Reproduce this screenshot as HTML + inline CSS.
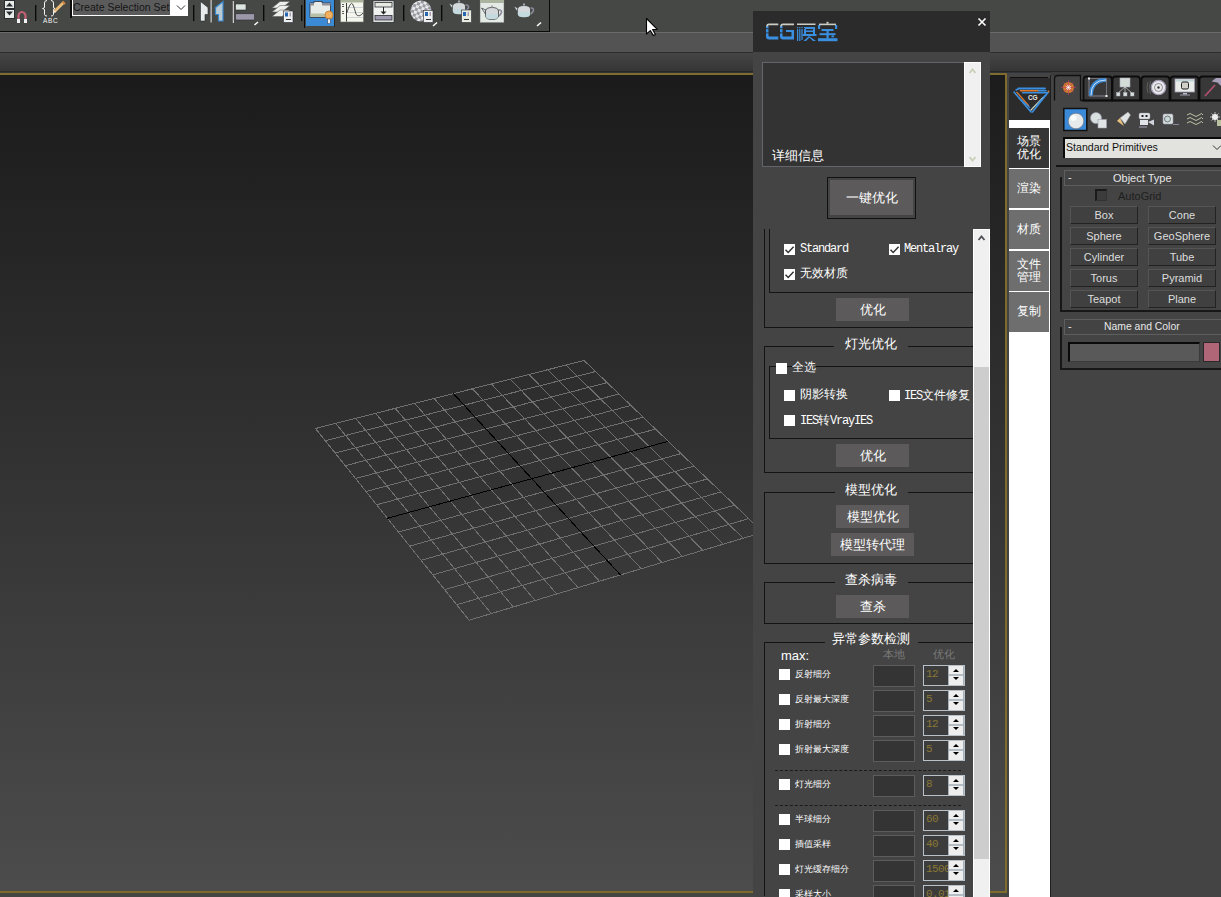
<!DOCTYPE html>
<html><head><meta charset="utf-8">
<style>
*{margin:0;padding:0;box-sizing:border-box}
html,body{width:1221px;height:897px;overflow:hidden;background:#444;font-family:"Liberation Sans",sans-serif;}
.a{position:absolute}
#tb{left:0;top:0;width:1221px;height:32px;background:#464846}
#tbline{left:0;top:32px;width:1221px;height:1px;background:#6a6a6a}
#band2{left:0;top:33px;width:1221px;height:19px;background:#535353}
#band2l{left:0;top:52px;width:1221px;height:1px;background:#2e2e2e}
#band3{left:0;top:53px;width:1221px;height:20px;background:linear-gradient(#454545,#363636 88%,#262626 90%,#262626 95%,#30333a 95%)}
#vp{left:0;top:73px;width:1007px;height:820px;border:2px solid #7f6b2b;border-left:none;background:linear-gradient(#1b1b1b,#4c4c4c)}
#below{left:0;top:893px;width:1007px;height:4px;background:#444644}
/* plugin panel */
#pp{left:753px;top:11px;width:237px;height:886px;background:#444}
#pph{left:753px;top:11px;width:237px;height:41px;background:#2b2b2b}
.cj{font-family:"Liberation Sans",sans-serif;color:#fff}
#info{left:762px;top:62px;width:202px;height:105px;background:#333;border:1px solid #62666c;border-right:none}
#infosb{left:964px;top:62px;width:17px;height:105px;background:#f0f0f0;border:1px solid #fff}
.btn{background:#5c5a5a;color:#fff;font-size:13px;text-align:center}
.gl{background:#151515}
.cb{width:11px;height:11px;background:#fff}
.mono{font-family:"Liberation Mono",monospace;font-size:12px;color:#fff;letter-spacing:-1.2px;white-space:nowrap}
.mono b{font-weight:normal;font-family:"Liberation Sans",sans-serif;letter-spacing:0}
.sm{font-size:9px;color:#fff}
.loc{width:42px;height:22px;background:#343434;border:1px solid #5a5a5a}
.spn{width:42px;height:21px;background:#3c3c3c;border:1px solid #b8c0c8}
.spn .v{position:absolute;left:2px;top:2px;font-size:11px;line-height:12px;color:#8a7834;font-family:"Liberation Mono",monospace;letter-spacing:-0.6px;width:22px;overflow:hidden;white-space:nowrap}
.spn .bt{position:absolute;left:24px;top:0;width:16px;height:19px;background:#eeeeee;border-left:1px solid #a8b0b8;border-right:1px solid #a8b0b8}
.spn .md{position:absolute;left:0;top:8px;width:14px;height:2px;background:#b4bcc4}
.up{position:absolute;left:4px;top:3px;width:0;height:0;border-left:3px solid transparent;border-right:3px solid transparent;border-bottom:3px solid #000}
.dn{position:absolute;left:4px;top:11px;width:0;height:0;border-left:3px solid transparent;border-right:3px solid transparent;border-top:3px solid #000}
.dash{border-top:1px dashed #111;height:1px}
/* tab strip */
#ts{left:1009px;top:76px;width:41px;height:821px;background:#fff}
.tab{position:absolute;left:0;width:40px;background:#6f6f6f;color:#eee;font-size:13px;line-height:13px;text-align:center}
/* cmd panel */
#cp{left:1050px;top:74px;width:171px;height:823px;background:#444;border-left:2px solid #222}
.ob{position:absolute;width:68px;height:18px;background:#404040;border:1px solid #222;border-top-color:#555;border-left-color:#555;color:#ddd;font-size:11px;line-height:16px;text-align:center}
</style></head><body>
<div class="a" id="tb"></div>
<div class="a" id="tbline"></div>
<div class="a" id="band2"></div>
<div class="a" id="band2l"></div>
<div class="a" id="band3"></div>
<svg class="a" style="left:0;top:0" width="560" height="32">
<!-- spinner -->
<rect x="4.5" y="0.5" width="10" height="8" fill="#e9ede9" stroke="#2a2e33"/>
<rect x="4.5" y="9.5" width="10" height="9" fill="#e9ede9" stroke="#2a2e33"/>
<path d="M6 6.5L9.5 2.5L13 6.5Z" fill="#2a2e33"/><path d="M6 11.5L9.5 15.5L13 11.5Z" fill="#2a2e33"/>
<!-- magnet -->
<path d="M18.5 23V16a3.5 4 0 0 1 7 0V23" fill="none" stroke="#c46075" stroke-width="2.2"/>
<rect x="17" y="19" width="3" height="4" fill="#f2f4f8"/><rect x="24" y="19" width="3" height="4" fill="#f2f4f8"/>
<rect x="35" y="5" width="1.4" height="16" fill="#0a0a0a"/>
<!-- braces ABC pencil -->
<path d="M47 0.5Q44.5 0.5 44.5 3V7Q44.5 8.5 42.5 8.5Q44.5 8.5 44.5 10V14.5Q44.5 16 47 16M51 0.5Q53.5 0.5 53.5 3V7Q53.5 8.5 55 8.5Q53.5 8.5 53.5 10V14.5Q53.5 16 51 16" fill="none" stroke="#f4f4f4" stroke-width="1"/>
<text x="43" y="23" font-family="Liberation Sans" font-size="6.5" fill="#f4f4f4" letter-spacing="0.7">ABC</text>
<path d="M54 12L63.5 2.5" stroke="#f0c888" stroke-width="2.8"/><path d="M54.5 11L63 2.5" stroke="#e8a050" stroke-width="1"/><path d="M62.5 1.5L65 4" stroke="#d08840" stroke-width="2"/><path d="M53 13l1.5 -2.5l1.5 1.5z" fill="#f0f0f0"/>
<!-- dropdown -->
<rect x="70" y="0" width="2" height="18" fill="#0d0d0d"/>
<rect x="72" y="0" width="116" height="16" fill="#fff"/>
<rect x="73" y="0" width="97" height="15" fill="#5b5b5b"/>
<path d="M177 5.5L181 9.5L185 5.5" fill="none" stroke="#333" stroke-width="1"/>
<rect x="193" y="5" width="1.4" height="16" fill="#0a0a0a"/>
<!-- mirror -->
<path d="M200.5 1.5L208 7.5V14.5H205V21H200.5Z" fill="#e6ecec" stroke="#2a2e33" stroke-width="0.6"/>
<rect x="210.6" y="0" width="1" height="22.5" fill="#e8e8e8"/>
<path d="M223 1.5L215.5 7.5V14.5H218.5V21H223Z" fill="#b8cad4" stroke="#3a86cc" stroke-width="1.2"/>
<!-- align -->
<rect x="232.8" y="1" width="1" height="22" fill="#e8e8e8"/>
<rect x="235.5" y="4" width="10.5" height="6" fill="#dde5e0" stroke="#2a2e33" stroke-width="0.6"/>
<rect x="235.5" y="13.8" width="19" height="6.2" fill="#9c98a8" stroke="#2a2e33" stroke-width="0.6"/>
<path d="M254.5 25L258 22" stroke="#fff" stroke-width="1.5"/>
<rect x="263" y="5" width="1.4" height="16" fill="#0a0a0a"/>
<!-- layers -->
<path d="M272 8L280 1.5H290L282 8Z" fill="#eceeea" stroke="#555" stroke-width="0.5"/>
<path d="M272 12L280 5.5H290L282 12Z" fill="#eceeea" stroke="#555" stroke-width="0.5"/>
<path d="M272 16.5L280 10H290L282 16.5Z" fill="#eceeea" stroke="#555" stroke-width="0.5"/>
<rect x="283.5" y="11" width="9.5" height="11.5" fill="#eef0f2" stroke="#2a2e33" stroke-width="0.6"/>
<rect x="285" y="12.5" width="3" height="4" fill="#2868b0"/><rect x="289.5" y="12.5" width="1.5" height="4" fill="#a8a0b0"/>
<rect x="286" y="19" width="5" height="1" fill="#333"/>
<rect x="301" y="5" width="1.4" height="16" fill="#0a0a0a"/>
<rect x="304" y="0" width="1" height="28" fill="#0a0a0a"/>
<!-- blue button -->
<rect x="306" y="0" width="28" height="26" fill="#3a8ad6"/>
<rect x="334" y="0" width="1" height="27" fill="#2a2a2a"/>
<path d="M310 3H314V1.5H322V3H330.5V17.5H310Z" fill="#e8ece8" stroke="#2a2e33" stroke-width="0.8"/>
<rect x="310" y="3" width="4" height="2.5" fill="#8f8f9a"/><rect x="322" y="3" width="8.5" height="2.5" fill="#8f8f9a"/>
<rect x="310.5" y="13.5" width="19.5" height="3.5" fill="#b8c0a8"/>
<circle cx="329" cy="15" r="4" fill="#f0b060" stroke="#c07a30" stroke-width="0.8"/>
<rect x="327.8" y="19" width="2.4" height="4.5" fill="#eee" stroke="#333" stroke-width="0.4"/>
<!-- curve editor -->
<rect x="340.5" y="0.5" width="23" height="21.5" fill="#f4f6ee" stroke="#6a6e60" stroke-width="0.6"/>
<rect x="340.5" y="0" width="23" height="2.5" fill="#aab39c"/>
<rect x="346" y="3" width="0.9" height="18.5" fill="#222"/>
<path d="M342 4.5h2M342 6.5h2M342 11.5h2M342 13.5h2" stroke="#333" stroke-width="0.8"/>
<path d="M347 12.5h16M347 7.5h16M347 17.5h16" stroke="#a8b0c0" stroke-width="0.5"/>
<path d="M347 12.5C349 6 351 2 352.5 4C354 6 355 11 356 14C357 16 360 17 363 13" fill="none" stroke="#333" stroke-width="0.9"/>
<!-- stack -->
<rect x="373" y="0.8" width="21" height="21.5" fill="#f0f2f0" stroke="#2a2e33" stroke-width="0.8"/>
<rect x="375" y="2.5" width="17" height="4.5" fill="#e6e8e2" stroke="#2a2e33" stroke-width="0.8"/>
<rect x="375" y="15.5" width="17" height="4.5" fill="#a09aae" stroke="#2a2e33" stroke-width="0.8"/>
<path d="M383.5 7v6" stroke="#222" stroke-width="1"/><path d="M380.5 11.5h6l-3 3z" fill="#222"/>
<rect x="403" y="5" width="1.4" height="16" fill="#0a0a0a"/>
<!-- checker sphere -->
<defs><pattern id="chk" width="6" height="6" patternUnits="userSpaceOnUse" patternTransform="rotate(20)"><rect width="6" height="6" fill="#e8e8e8"/><rect width="3" height="3" fill="#9a9aa4"/><rect x="3" y="3" width="3" height="3" fill="#9a9aa4"/></pattern></defs>
<circle cx="421" cy="11" r="10.5" fill="url(#chk)"/>
<rect x="423.5" y="10.5" width="9.5" height="12" fill="#eef0f2" stroke="#2a2e33" stroke-width="0.6"/>
<rect x="425" y="12" width="3" height="4" fill="#2868b0"/><rect x="429.5" y="12" width="1.5" height="4" fill="#a8a0b0"/><rect x="426" y="19" width="5" height="1" fill="#333"/>
<path d="M433 26L437 22.5" stroke="#fff" stroke-width="1.5"/>
<rect x="441" y="5" width="1.4" height="16" fill="#0a0a0a"/>
<!-- teapot+doc -->
<g transform="translate(448,0) scale(1.0)">
<path d="M0.5 3L6 5.5L6 11.5Z" fill="#d0dce0" stroke="#333" stroke-width="0.6"/>
<path d="M16 5.5Q21 4 20.5 7.5Q19.5 10.5 15.5 12" fill="none" stroke="#8a8a9a" stroke-width="1.6"/>
<path d="M4.5 6Q5 2.5 11 2.5Q17 2.5 17.5 6V11Q17 14.5 11 14.5Q5 14.5 4.5 11Z" fill="#d4d8da" stroke="#333" stroke-width="0.7"/>
<path d="M4.8 9H17.2V11Q17 14.2 11 14.2Q5 14.2 4.8 11Z" fill="#c4dadf"/>
<rect x="10" y="0.5" width="2" height="2" fill="#a8a8b0"/>
</g>
<rect x="461.5" y="10" width="10" height="12.5" fill="#e8ece0" stroke="#2a2e33" stroke-width="0.6"/>
<rect x="463" y="12" width="3" height="4" fill="#2868b0"/><rect x="467.5" y="12" width="1.5" height="4" fill="#a8a0b0"/><rect x="464" y="19" width="5" height="1" fill="#333"/>
<!-- framed teapot -->
<rect x="480" y="0" width="24" height="22.7" fill="#e4eae6" stroke="#666" stroke-width="0.5"/>
<rect x="480" y="0" width="24" height="3" fill="#aab39e"/>
<g transform="translate(481,5) scale(1.0)">
<path d="M0.5 3L6 5.5L6 11.5Z" fill="#d0dce0" stroke="#222" stroke-width="0.6"/>
<path d="M16 5.5Q21 4 20.5 7.5Q19.5 10.5 15.5 12" fill="none" stroke="#8a8a9a" stroke-width="1.6"/>
<path d="M4.5 6Q5 2.5 11 2.5Q17 2.5 17.5 6V11Q17 14.5 11 14.5Q5 14.5 4.5 11Z" fill="#d4d8da" stroke="#222" stroke-width="0.7"/>
<path d="M4.8 9H17.2V11Q17 14.2 11 14.2Q5 14.2 4.8 11Z" fill="#c4dadf"/>
<rect x="10" y="0.5" width="2" height="2" fill="#a8a8b0"/>
</g>
<!-- teapot -->
<g transform="translate(513,3) scale(1.0)">
<path d="M0.5 3L6 5.5L6 11.5Z" fill="#d0dce0" stroke="#333" stroke-width="0.6"/>
<path d="M16 5.5Q21 4 20.5 7.5Q19.5 10.5 15.5 12" fill="none" stroke="#8a8a9a" stroke-width="1.6"/>
<path d="M4.5 6Q5 2.5 11 2.5Q17 2.5 17.5 6V11Q17 14.5 11 14.5Q5 14.5 4.5 11Z" fill="#d4d8da" stroke="#333" stroke-width="0.7"/>
<path d="M4.8 9H17.2V11Q17 14.2 11 14.2Q5 14.2 4.8 11Z" fill="#c4dadf"/>
<rect x="10" y="0.5" width="2" height="2" fill="#a8a8b0"/>
</g>
<path d="M537 26L541 22.5" stroke="#fff" stroke-width="1.5"/>
<rect x="549" y="0" width="1" height="32" fill="#0a0a0a"/>
<rect x="0" y="31" width="550" height="1" fill="#0a0a0a"/>
</svg>
<div class="a" style="left:73px;top:1px;width:97px;height:14px;overflow:hidden;font-size:10.5px;line-height:12px;color:#151515;white-space:nowrap">Create Selection Set</div>

<div class="a" id="vp"></div>
<div class="a" id="below"></div>
<svg class="a" style="left:0;top:0" width="1221" height="897">
<path d="M315.5 428.5L469.1 620.2M315.5 428.5L584.1 360.5M335.7 423.4L491.3 613.6M325.3 440.7L595.5 371.5M355.7 418.4L513.3 607.0M335.2 453.1L607.1 382.6M375.5 413.3L535.1 600.5M345.3 465.7L619.0 394.0M395.2 408.4L556.7 594.0M355.5 478.5L630.9 405.5M414.7 403.4L578.1 587.6M366.0 491.5L643.2 417.2M434.1 398.5L599.4 581.2M376.6 504.8L655.6 429.1M472.5 388.8L641.3 568.7M398.5 532.1L681.0 453.6M491.4 384.0L662.0 562.5M409.7 546.1L694.1 466.1M510.3 379.2L682.6 556.4M421.1 560.3L707.4 478.9M528.9 374.5L702.9 550.3M432.8 574.9L720.9 491.9M547.5 369.8L723.1 544.2M444.6 589.7L734.7 505.1M565.9 365.1L743.1 538.2M456.7 604.8L748.7 518.6M584.1 360.5L763.0 532.3M469.1 620.2L763.0 532.3" stroke="#6f6f6f" fill="none" shape-rendering="crispEdges"/>
<path d="M453.4 393.6L620.4 574.9M387.4 518.3L668.2 441.3" stroke="#000" fill="none" shape-rendering="crispEdges"/>
</svg>

<!-- plugin panel -->
<div class="a" id="pp"></div>
<div class="a" id="pph"></div>
<svg class="a" style="left:760px;top:18px" width="85" height="28">
<g transform="translate(-760,-18)">
<g fill="#3a8fe0">
<!-- C -->
<path d="M766 26H768.5V35.5Q768.5 36.5 769.5 36.5H778.5V39.5H769Q766 39.5 766 36.5Z"/>
<!-- G -->
<path d="M780 26H782.5V35.5Q782.5 36.5 783.5 36.5H794V39.5H783Q780 39.5 780 36.5Z"/><rect x="786" y="30" width="8" height="2"/><rect x="791.5" y="30" width="2.5" height="8"/>
<!-- 模 -->
<rect x="797" y="27" width="1.2" height="14"/><rect x="799.2" y="27" width="1.2" height="14"/><rect x="801.4" y="27" width="1.2" height="13"/>
<rect x="804" y="27" width="11" height="2"/><rect x="804" y="27" width="2" height="7"/><rect x="813" y="27" width="2" height="7"/><rect x="804" y="30.5" width="11" height="1.5"/>
<rect x="802.5" y="34" width="14" height="2"/><path d="M809 36L803.5 41H806L809.5 37.5L813 41H816Z"/>
<!-- 宝 -->
<rect x="818" y="25" width="2.2" height="4"/><rect x="835" y="25" width="2.2" height="4"/>
<rect x="821.5" y="29" width="12" height="2"/><rect x="819.5" y="33.2" width="16" height="2"/><rect x="818" y="38.2" width="19.5" height="3"/><rect x="826.5" y="29" width="2.2" height="9.5"/><rect x="831.5" y="35.5" width="2.5" height="1.8"/>
</g>
<g fill="#c9cdc4">
<path d="M766.2 26.5Q766.2 23.6 769 23.6H778.5V25.2H769Q767.8 25.2 767.8 26.5Z"/><path d="M780.2 26.5Q780.2 23.6 783 23.6H794V25.2H783Q781.8 25.2 781.8 26.5Z"/>
<rect x="797" y="23.5" width="18.5" height="1.5"/><rect x="819" y="23.6" width="17" height="1.6"/><rect x="826.5" y="21.8" width="2" height="2"/>
</g>
<g fill="#2b2b2b"><rect x="765" y="28.3" width="40" height="0.8"/><rect x="778.6" y="23" width="1" height="18"/><rect x="765" y="32.5" width="16" height="0.8"/><rect x="779" y="32.5" width="5" height="0.8"/></g>
</g>
</svg>
<svg class="a" style="left:977px;top:17px" width="10" height="10"><path d="M1.5 1.5L8.5 8.5M8.5 1.5L1.5 8.5" stroke="#fff" stroke-width="1.6"/></svg>
<div class="a" id="info"></div>
<div class="a" id="infosb"></div>
<div class="a cj" style="left:772px;top:147px;font-size:13px">详细信息</div>
<svg class="a" style="left:964px;top:62px" width="17" height="105"><path d="M5.5 11L8.5 7.5L11.5 11M5.5 95L8.5 98.5L11.5 95" fill="none" stroke="#c8d0b8" stroke-width="1.8"/></svg>
<div class="a" style="left:827px;top:177px;width:89px;height:42px;border:1px solid #111"></div>
<div class="a btn" style="left:830px;top:180px;width:83px;height:35px;line-height:35px">一键优化</div>

<!-- scroll region -->
<div class="a" id="sc" style="left:753px;top:229px;width:220px;height:668px;overflow:hidden">
<div class="a" style="left:11px;top:0px;width:1px;height:98px;background:#141414"></div>
<div class="a" style="left:11px;top:98px;width:209px;height:1px;background:#141414"></div>
<div class="a" style="left:16px;top:0px;width:1px;height:63px;background:#141414"></div>
<div class="a" style="left:16px;top:63px;width:204px;height:1px;background:#141414"></div>
<div class="a cb" style="left:31px;top:15px"><svg width="11" height="11" style="position:absolute;left:0;top:0"><path d="M1.5 5.8L4.2 8.5L9.6 2.8" fill="none" stroke="#333" stroke-width="1.5"/></svg></div>
<div class="a mono" style="left:47px;top:13px;line-height:14px">Standard</div>
<div class="a cb" style="left:136px;top:15px"><svg width="11" height="11" style="position:absolute;left:0;top:0"><path d="M1.5 5.8L4.2 8.5L9.6 2.8" fill="none" stroke="#333" stroke-width="1.5"/></svg></div>
<div class="a mono" style="left:151px;top:13px;line-height:14px">Mentalray</div>
<div class="a cb" style="left:31px;top:40px"><svg width="11" height="11" style="position:absolute;left:0;top:0"><path d="M1.5 5.8L4.2 8.5L9.6 2.8" fill="none" stroke="#333" stroke-width="1.5"/></svg></div>
<div class="a cj" style="left:47px;top:37px;font-size:12px;line-height:14px">无效材质</div>
<div class="a btn" style="left:83px;top:69px;width:73px;height:23px;line-height:23px">优化</div>
<div class="a" style="left:11px;top:117px;width:70px;height:1px;background:#141414"></div>
<div class="a" style="left:155px;top:117px;width:65px;height:1px;background:#141414"></div>
<div class="a cj" style="left:92px;top:107px;font-size:13px;line-height:15px">灯光优化</div>
<div class="a" style="left:11px;top:117px;width:1px;height:126px;background:#141414"></div>
<div class="a" style="left:11px;top:243px;width:209px;height:1px;background:#141414"></div>
<div class="a" style="left:16px;top:137px;width:204px;height:1px;background:#141414"></div>
<div class="a" style="left:16px;top:137px;width:1px;height:72px;background:#141414"></div>
<div class="a" style="left:16px;top:209px;width:204px;height:1px;background:#141414"></div>
<div class="a cb" style="left:23px;top:134px"></div>
<div class="a cj" style="left:39px;top:131px;font-size:12px;line-height:14px">全选</div>
<div class="a cb" style="left:31px;top:161px"></div>
<div class="a cj" style="left:47px;top:158px;font-size:12px;line-height:14px">阴影转换</div>
<div class="a cb" style="left:136px;top:161px"></div>
<div class="a mono" style="left:151px;top:159px;line-height:14px">IES<b>文件修复</b></div>
<div class="a cb" style="left:31px;top:186px"></div>
<div class="a mono" style="left:47px;top:184px;line-height:14px">IES<b>转</b>VrayIES</div>
<div class="a btn" style="left:83px;top:215px;width:73px;height:23px;line-height:23px">优化</div>
<div class="a" style="left:11px;top:263px;width:71px;height:1px;background:#141414"></div>
<div class="a" style="left:155px;top:263px;width:65px;height:1px;background:#141414"></div>
<div class="a cj" style="left:92px;top:253px;font-size:13px;line-height:15px">模型优化</div>
<div class="a" style="left:11px;top:263px;width:1px;height:71px;background:#141414"></div>
<div class="a" style="left:11px;top:334px;width:209px;height:1px;background:#141414"></div>
<div class="a btn" style="left:83px;top:276px;width:73px;height:23px;line-height:23px">模型优化</div>
<div class="a btn" style="left:78px;top:304px;width:83px;height:23px;line-height:23px">模型转代理</div>
<div class="a" style="left:11px;top:353px;width:71px;height:1px;background:#141414"></div>
<div class="a" style="left:155px;top:353px;width:65px;height:1px;background:#141414"></div>
<div class="a cj" style="left:92px;top:343px;font-size:13px;line-height:15px">查杀病毒</div>
<div class="a" style="left:11px;top:353px;width:1px;height:41px;background:#141414"></div>
<div class="a" style="left:11px;top:394px;width:209px;height:1px;background:#141414"></div>
<div class="a btn" style="left:83px;top:366px;width:73px;height:23px;line-height:23px">查杀</div>
<div class="a" style="left:11px;top:413px;width:61px;height:1px;background:#141414"></div>
<div class="a" style="left:165px;top:413px;width:55px;height:1px;background:#141414"></div>
<div class="a cj" style="left:79px;top:402px;font-size:13px;line-height:15px">异常参数检测</div>
<div class="a" style="left:11px;top:413px;width:1px;height:254px;background:#141414"></div>
<div class="a cj" style="left:28px;top:419px;font-size:13px;line-height:15px">max:</div>
<div class="a cj" style="left:130px;top:419px;font-size:11px;line-height:13px;color:#7a7a7a">本地</div>
<div class="a cj" style="left:180px;top:419px;font-size:11px;line-height:13px;color:#7a7a7a">优化</div>
<div class="a cb" style="left:26px;top:440px"></div>
<div class="a sm" style="left:42px;top:440px;line-height:11px">反射细分</div>
<div class="a" style="left:120px;top:436px;width:42px;height:22px;background:#343434;border:1px solid #5c5c5c"></div>
<div class="a spn" style="left:170px;top:436px"><div class="v">12</div><div class="bt"><div class="md"></div><div class="up"></div><div class="dn"></div></div></div>
<div class="a cb" style="left:26px;top:465px"></div>
<div class="a sm" style="left:42px;top:465px;line-height:11px">反射最大深度</div>
<div class="a" style="left:120px;top:461px;width:42px;height:22px;background:#343434;border:1px solid #5c5c5c"></div>
<div class="a spn" style="left:170px;top:461px"><div class="v">5</div><div class="bt"><div class="md"></div><div class="up"></div><div class="dn"></div></div></div>
<div class="a cb" style="left:26px;top:490px"></div>
<div class="a sm" style="left:42px;top:490px;line-height:11px">折射细分</div>
<div class="a" style="left:120px;top:486px;width:42px;height:22px;background:#343434;border:1px solid #5c5c5c"></div>
<div class="a spn" style="left:170px;top:486px"><div class="v">12</div><div class="bt"><div class="md"></div><div class="up"></div><div class="dn"></div></div></div>
<div class="a cb" style="left:26px;top:515px"></div>
<div class="a sm" style="left:42px;top:515px;line-height:11px">折射最大深度</div>
<div class="a" style="left:120px;top:511px;width:42px;height:22px;background:#343434;border:1px solid #5c5c5c"></div>
<div class="a spn" style="left:170px;top:511px"><div class="v">5</div><div class="bt"><div class="md"></div><div class="up"></div><div class="dn"></div></div></div>
<div class="a cb" style="left:26px;top:550px"></div>
<div class="a sm" style="left:42px;top:550px;line-height:11px">灯光细分</div>
<div class="a" style="left:120px;top:546px;width:42px;height:22px;background:#343434;border:1px solid #5c5c5c"></div>
<div class="a spn" style="left:170px;top:546px"><div class="v">8</div><div class="bt"><div class="md"></div><div class="up"></div><div class="dn"></div></div></div>
<div class="a cb" style="left:26px;top:585px"></div>
<div class="a sm" style="left:42px;top:585px;line-height:11px">半球细分</div>
<div class="a" style="left:120px;top:581px;width:42px;height:22px;background:#343434;border:1px solid #5c5c5c"></div>
<div class="a spn" style="left:170px;top:581px"><div class="v">60</div><div class="bt"><div class="md"></div><div class="up"></div><div class="dn"></div></div></div>
<div class="a cb" style="left:26px;top:610px"></div>
<div class="a sm" style="left:42px;top:610px;line-height:11px">插值采样</div>
<div class="a" style="left:120px;top:606px;width:42px;height:22px;background:#343434;border:1px solid #5c5c5c"></div>
<div class="a spn" style="left:170px;top:606px"><div class="v">40</div><div class="bt"><div class="md"></div><div class="up"></div><div class="dn"></div></div></div>
<div class="a cb" style="left:26px;top:635px"></div>
<div class="a sm" style="left:42px;top:635px;line-height:11px">灯光缓存细分</div>
<div class="a" style="left:120px;top:631px;width:42px;height:22px;background:#343434;border:1px solid #5c5c5c"></div>
<div class="a spn" style="left:170px;top:631px"><div class="v">1500</div><div class="bt"><div class="md"></div><div class="up"></div><div class="dn"></div></div></div>
<div class="a cb" style="left:26px;top:660px"></div>
<div class="a sm" style="left:42px;top:660px;line-height:11px">采样大小</div>
<div class="a" style="left:120px;top:656px;width:42px;height:22px;background:#343434;border:1px solid #5c5c5c"></div>
<div class="a spn" style="left:170px;top:656px"><div class="v">0.01</div><div class="bt"><div class="md"></div><div class="up"></div><div class="dn"></div></div></div>
<div class="a" style="left:22px;top:541px;width:186px;height:1px;border-top:1px dashed #1a1a1a"></div>
<div class="a" style="left:22px;top:576px;width:186px;height:1px;border-top:1px dashed #1a1a1a"></div>
</div>
<div class="a" style="left:973px;top:229px;width:17px;height:668px;background:#f0f0f0;border-left:1px solid #fff;border-right:1px solid #fff"></div>
<div class="a" style="left:973px;top:367px;width:17px;height:492px;background:#cdcdcd;border-left:1px solid #fff;border-right:1px solid #fff"></div>
<div class="a" style="left:973px;top:229px;width:17px;height:138px;border:1px solid #fff;border-bottom:none"></div>
<svg class="a" style="left:973px;top:229px" width="17" height="17"><path d="M5.5 11L8.5 7.5L11.5 11" fill="none" stroke="#4e4e56" stroke-width="1.8"/></svg>
<div class="a" style="left:990px;top:75px;width:15px;height:816px;background:linear-gradient(#1c1c1c,#4c4c4c)"></div>

<!-- tab strip -->
<div class="a" style="left:1007px;top:75px;width:44px;height:822px;background:#444"></div>
<div class="a" style="left:1010px;top:77px;width:38px;height:1px;background:#111"></div>
<div class="a" style="left:1009px;top:78px;width:41px;height:42px;background:#2b2b2b"></div>
<svg class="a" style="left:1009px;top:78px" width="41" height="42">
<g transform="translate(-1009,-78)" fill="none" stroke-linecap="round">
<path d="M1018.5 88.5H1045" stroke="#3a8fe0" stroke-width="1.8"/>
<path d="M1020.5 90.7H1038.5" stroke="#e07a30" stroke-width="1.5"/>
<path d="M1038.5 90.7H1046" stroke="#3a8fe0" stroke-width="1.5"/>
<path d="M1022.5 92.7H1047.8" stroke="#3a8fe0" stroke-width="1.4"/>
<path d="M1014 92L1031 112" stroke="#3a8fe0" stroke-width="1.6"/>
<path d="M1016 90L1018 89" stroke="#3a8fe0" stroke-width="1.4"/>
<path d="M1017 92.4L1028.4 105.4" stroke="#e07a30" stroke-width="1.4"/>
<path d="M1019 98L1029.7 107.4" stroke="#3a8fe0" stroke-width="1.2"/>
<path d="M1047.8 92.7L1032.4 112" stroke="#3a8fe0" stroke-width="1.6"/>
<path d="M1043 97.4L1031 110" stroke="#c8d0b8" stroke-width="1.3"/>
<path d="M1045 95L1036 106" stroke="#3a8fe0" stroke-width="1"/>
<circle cx="1048.5" cy="91.5" r="0.9" fill="#e07a30" stroke="none"/>
</g>
<text x="19" y="22.3" font-family="Liberation Sans" font-size="6.5" font-weight="bold" fill="#e8e8e8" letter-spacing="-0.2">CG</text>
</svg>
<div class="a" style="left:1009px;top:120px;width:41px;height:777px;background:#fff"></div>
<div class="a" style="left:1050px;top:75px;width:1px;height:822px;background:#1e1e1e"></div>
<div class="a" style="left:1009px;top:128px;width:40px;height:40px;background:#363636;color:#fff;font-size:12px;line-height:13px;text-align:center;padding-top:7px">场景<br>优化</div>
<div class="a" style="left:1009px;top:169px;width:40px;height:39px;background:#6e6e6e;color:#fff;font-size:12px;line-height:13px;text-align:center;padding-top:13px">渲染</div>
<div class="a" style="left:1009px;top:210px;width:40px;height:39px;background:#6e6e6e;color:#fff;font-size:12px;line-height:13px;text-align:center;padding-top:13px">材质</div>
<div class="a" style="left:1009px;top:251px;width:40px;height:40px;background:#6e6e6e;color:#fff;font-size:12px;line-height:13px;text-align:center;padding-top:7px">文件<br>管理</div>
<div class="a" style="left:1009px;top:292px;width:40px;height:40px;background:#6e6e6e;color:#fff;font-size:12px;line-height:13px;text-align:center;padding-top:13px">复制</div>


<!-- command panel -->
<div class="a" style="left:1051px;top:75px;width:170px;height:822px;background:#444"></div>
<div class="a" style="left:1051px;top:72px;width:170px;height:4px;background:#3c3c3c"></div>
<svg class="a" style="left:1051px;top:72px" width="170" height="62">
<!-- active tab -->
<path d="M3.5 28.5V7Q3.5 3.5 7 3.5H29.5V28.5" fill="#444" stroke="#111" stroke-width="1.3"/>
<!-- inactive tabs -->
<path d="M32.5 28.5V7.5Q32.5 4.5 35.5 4.5H58Q61 4.5 61 7.5V28.5Z" fill="#383838" stroke="#0c0c0c" stroke-width="1.8"/>
<path d="M61.5 28.5V7.5Q61.5 4.5 64.5 4.5H86Q89 4.5 89 7.5V28.5Z" fill="#383838" stroke="#0c0c0c" stroke-width="1.8"/>
<path d="M90.5 28.5V7.5Q90.5 4.5 93.5 4.5H115.5Q118.5 4.5 118.5 7.5V28.5Z" fill="#383838" stroke="#0c0c0c" stroke-width="1.8"/>
<path d="M119.5 28.5V7.5Q119.5 4.5 122.5 4.5H144.5Q147.5 4.5 147.5 7.5V28.5Z" fill="#383838" stroke="#0c0c0c" stroke-width="1.8"/>
<path d="M148.5 28.5V7.5Q148.5 4.5 151.5 4.5H175V28.5Z" fill="#383838" stroke="#0c0c0c" stroke-width="1.8"/>
<path d="M29.5 28.5H175" stroke="#0c0c0c" stroke-width="1.3"/>
<!-- sun -->
<circle cx="17.5" cy="15.5" r="5.5" fill="#d07a30"/><circle cx="17.5" cy="15.5" r="2.5" fill="#f8e8c0"/>
<path d="M17.5 8v15M10 15.5h15M12.5 10.5l10 10M22.5 10.5l-10 10" stroke="#c04060" stroke-width="0.7"/>
<circle cx="17.5" cy="15.5" r="1.2" fill="#fff"/>
<!-- curve -->
<path d="M38 6.5V24H55.5" fill="none" stroke="#9a9ab0" stroke-width="0.8"/><path d="M38 6.5H55.5V24" fill="none" stroke="#9a9ab0" stroke-width="0.6"/>
<path d="M40 23.5Q40 8 55 8" fill="none" stroke="#3a8ad8" stroke-width="4"/><path d="M40 23.5Q40 8 55 8" fill="none" stroke="#c8e0f0" stroke-width="1"/>
<rect x="37" y="5.5" width="2" height="2" fill="#eee"/><rect x="54.5" y="23" width="2" height="2" fill="#eee"/>
<!-- hierarchy -->
<rect x="69" y="6" width="10" height="9" fill="#d4dcd8" stroke="#a8a8b8" stroke-width="0.6"/>
<path d="M74 15V21M74 15L67 21M74 15L81 21" stroke="#ddd" stroke-width="0.7"/>
<rect x="65.5" y="20.5" width="3.5" height="3.5" fill="#d8e0dc" stroke="#a8a8b8" stroke-width="0.5"/><rect x="72.5" y="20.5" width="3.5" height="3.5" fill="#d8e0dc" stroke="#a8a8b8" stroke-width="0.5"/><rect x="79.5" y="20.5" width="3.5" height="3.5" fill="#d8e0dc" stroke="#a8a8b8" stroke-width="0.5"/>
<!-- disc -->
<circle cx="107.5" cy="15.5" r="7.2" fill="#e8e8ec" stroke="#a098b0" stroke-width="1.3"/><circle cx="107.5" cy="15.5" r="4" fill="none" stroke="#555" stroke-width="0.6"/><circle cx="107.5" cy="15.5" r="1.2" fill="#333"/>
<path d="M97 10Q95 15.5 97 21M99.5 9Q97.5 15.5 99.5 22" fill="none" stroke="#777" stroke-width="0.6"/>
<!-- monitor -->
<rect x="124" y="7" width="19.5" height="13" fill="#e8ece8" stroke="#a098b0" stroke-width="0.8"/>
<rect x="124.5" y="7.5" width="18.5" height="2" fill="#c0d4d8"/>
<rect x="130.5" y="10" width="7" height="7" rx="1.5" fill="#d0d0c8" stroke="#222" stroke-width="1"/>
<rect x="132" y="21" width="4" height="1.5" fill="#b8c0c8"/><rect x="129" y="22.5" width="10" height="1" fill="#a098b0"/>
<!-- hammer -->
<path d="M154 24L164 13" stroke="#b05070" stroke-width="1.8"/><path d="M160.5 9.5L165 6H170V14L166.5 10.5Z" fill="#a8a0b8"/>
<!-- row 2 selected -->
<rect x="12.8" y="36.5" width="23" height="22" fill="#3a8ad8" stroke="#111" stroke-width="1.5"/>
<circle cx="25" cy="49" r="7.8" fill="#e6eaea" stroke="#6a6a7a" stroke-width="0.6"/><circle cx="22.5" cy="46" r="3" fill="#fff" opacity="0.8"/>
<!-- spheres+box -->
<circle cx="45" cy="46" r="5.5" fill="#d8e0e0" stroke="#a0a0b0" stroke-width="0.6"/>
<rect x="47" y="47.5" width="8.5" height="8.5" fill="#e0e4e4" stroke="#a0a0b0" stroke-width="0.6"/>
<!-- spotlight -->
<path d="M69 46L77 40L79.5 43L74 52Z" fill="#e0e4e4" stroke="#999" stroke-width="0.5"/><path d="M66 49Q70 52 73 54L69 46Z" fill="#e8c080"/>
<!-- camera -->
<rect x="88" y="41" width="11" height="6" rx="1.5" fill="#e0e4e8" stroke="#999" stroke-width="0.4"/><rect x="90.5" y="43" width="2" height="2" fill="#222"/><rect x="94.5" y="43" width="2" height="2" fill="#222"/>
<rect x="89" y="48" width="8" height="5" fill="#e0e4e8"/><path d="M97 50L103 47.5V53.5Z" fill="#d0d4dc"/><rect x="88" y="54.5" width="8" height="1" fill="#a8a0b8"/>
<!-- tape -->
<rect x="112" y="42" width="10" height="10" rx="1.5" fill="#d8e0e0" stroke="#a098b0" stroke-width="0.6"/><circle cx="116.5" cy="47" r="3" fill="#c8d8d8" stroke="#333" stroke-width="0.6"/><path d="M122 52.5H128" stroke="#a098b0" stroke-width="0.8"/>
<!-- waves -->
<path d="M136 43Q139 40 142 43T148 43T152 43M136 47Q139 44 142 47T148 47T152 47M136 51Q139 48 142 51T148 51T152 51" fill="none" stroke="#c8d0b0" stroke-width="0.9"/>
<!-- star -->
<circle cx="164" cy="45" r="3" fill="#eee"/><path d="M164 40v10M159 45h10M160.5 41.5l7 7M167.5 41.5l-7 7" stroke="#eee" stroke-width="0.7"/><rect x="166" y="48" width="4" height="6" fill="#b8c0a0"/>
</svg>
<div class="a" style="left:1063px;top:137px;width:158px;height:21px;background:#e2e3de;border-top:2px solid #0a0a0a;border-left:2px solid #0a0a0a"></div>
<div class="a" style="left:1066px;top:140px;font-size:10.6px;line-height:14px;color:#111;white-space:nowrap">Standard Primitives</div>
<svg class="a" style="left:1210px;top:140px" width="11" height="14"><path d="M3 5.5L7 9.5L11 5.5" fill="none" stroke="#333" stroke-width="1"/></svg>
<div class="a" style="left:1056px;top:165px;width:165px;height:2px;background:#141414"></div>
<!-- Object Type rollout -->
<div class="a" style="left:1060px;top:177px;width:161px;height:135px;border-left:2px solid #171717;border-bottom:2px solid #171717"></div>
<div class="a" style="left:1064px;top:170px;width:157px;height:16px;background:#434343;border:1px solid #5e5e5e;border-right:none"></div>
<div class="a" style="left:1068px;top:171px;font-size:11px;line-height:13px;color:#e8e8e8">-</div>
<div class="a" style="left:1113px;top:171px;font-size:11px;line-height:14px;color:#e8e8e8;white-space:nowrap">Object Type</div>
<div class="a" style="left:1095px;top:189px;width:12px;height:12px;background:#3c3c3c;border-top:2px solid #1a1a1a;border-left:2px solid #1a1a1a;border-right:1px solid #333;border-bottom:1px solid #333"></div>
<div class="a" style="left:1118px;top:189px;font-size:11px;line-height:14px;color:#1e1e1e;white-space:nowrap">AutoGrid</div>
<div class="ob" style="left:1070px;top:206px">Box</div><div class="ob" style="left:1148px;top:206px">Cone</div>
<div class="ob" style="left:1070px;top:227px">Sphere</div><div class="ob" style="left:1148px;top:227px">GeoSphere</div>
<div class="ob" style="left:1070px;top:248px">Cylinder</div><div class="ob" style="left:1148px;top:248px">Tube</div>
<div class="ob" style="left:1070px;top:269px">Torus</div><div class="ob" style="left:1148px;top:269px">Pyramid</div>
<div class="ob" style="left:1070px;top:290px">Teapot</div><div class="ob" style="left:1148px;top:290px">Plane</div>
<!-- Name and Color -->
<div class="a" style="left:1060px;top:327px;width:161px;height:43px;border-left:2px solid #171717;border-bottom:2px solid #171717"></div>
<div class="a" style="left:1064px;top:319px;width:157px;height:16px;background:#434343;border:1px solid #5e5e5e;border-right:none"></div>
<div class="a" style="left:1068px;top:320px;font-size:11px;line-height:13px;color:#e8e8e8">-</div>
<div class="a" style="left:1104px;top:320px;font-size:10.4px;line-height:14px;color:#e8e8e8;white-space:nowrap">Name and Color</div>
<div class="a" style="left:1068px;top:342px;width:132px;height:20px;background:#595959;border-top:2px solid #0a0a0a;border-left:2px solid #0a0a0a;border-right:1px solid #3a3a3a;border-bottom:1px solid #3a3a3a"></div>
<div class="a" style="left:1203px;top:342px;width:17px;height:20px;background:#b06676;border:1px solid #2a2a2a"></div>

<svg class="a" style="left:645px;top:17px" width="16" height="22"><path d="M1.5 1.5V17L5.3 13.6L8.4 18.6L10.4 17.6L7.6 12.6L12.3 12.3Z" fill="#fff" stroke="#000" stroke-width="1.1" stroke-linejoin="round"/></svg>
</body></html>
